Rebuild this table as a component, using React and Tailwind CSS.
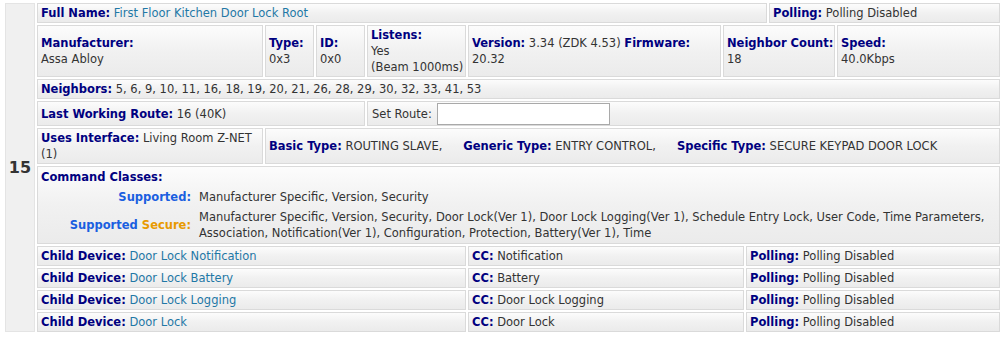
import React from 'react';

const Cell = ({ className = '', children }) => (
    <div className={`border border-[#dadada] bg-linear-to-b from-[#fcfcfc] via-[#f1f1f1] to-[#ebebeb] pl-[3px] pr-[3px] flex flex-col justify-center ${className}`}>
        {children}
    </div>
);

const Label = ({ children }) => <b className="font-bold text-[#000080]">{children}</b>;

const Link = ({ children }) => <span className="text-[#1f78a6]">{children}</span>;

const childDevices = [
    { name: 'Door Lock Notification', cc: 'Notification' },
    { name: 'Door Lock Battery', cc: 'Battery' },
    { name: 'Door Lock Logging', cc: 'Door Lock Logging' },
    { name: 'Door Lock', cc: 'Door Lock' },
];

export default function App() {
    return (
        <div className="w-[1001px] h-[337px] bg-white font-['DejaVu_Sans',sans-serif] text-[11.5px] leading-4 text-[#333]">
            <div className="flex gap-[2px] pt-[3px] pl-[5px]">
                {/* node number column */}
                <div className="w-[30px] h-[329px] bg-[#f0f0f0] border border-[#e4e4e4] flex items-center justify-center">
                    <span className="text-[16px] font-bold text-[#333]">15</span>
                </div>

                <div className="w-[963px] flex flex-col gap-[2px]">
                    <div className="flex gap-[2px] h-[20px]">
                        <Cell className="w-[730px]">
                            <div><Label>Full Name:</Label> <Link>First Floor Kitchen Door Lock Root</Link></div>
                        </Cell>
                        <Cell className="flex-1">
                            <div><Label>Polling:</Label> Polling Disabled</div>
                        </Cell>
                    </div>

                    <div className="flex gap-[2px] h-[52px]">
                        <Cell className="w-[226px]">
                            <div><Label>Manufacturer:</Label></div>
                            <div>Assa Abloy</div>
                        </Cell>
                        <Cell className="w-[49px]">
                            <div><Label>Type:</Label></div>
                            <div>0x3</div>
                        </Cell>
                        <Cell className="w-[49px]">
                            <div><Label>ID:</Label></div>
                            <div>0x0</div>
                        </Cell>
                        <Cell className="w-[99px]">
                            <div><Label>Listens:</Label></div>
                            <div>Yes</div>
                            <div className="whitespace-nowrap">(Beam 1000ms)</div>
                        </Cell>
                        <Cell className="w-[253px]">
                            <div><Label>Version:</Label> 3.34 (ZDK 4.53) <Label>Firmware:</Label></div>
                            <div>20.32</div>
                        </Cell>
                        <Cell className="w-[112px]">
                            <div className="whitespace-nowrap"><Label>Neighbor Count:</Label></div>
                            <div>18</div>
                        </Cell>
                        <Cell className="flex-1">
                            <div><Label>Speed:</Label></div>
                            <div>40.0Kbps</div>
                        </Cell>
                    </div>

                    <div className="flex h-[20px]">
                        <Cell className="flex-1">
                            <div><Label>Neighbors:</Label> 5, 6, 9, 10, 11, 16, 18, 19, 20, 21, 26, 28, 29, 30, 32, 33, 41, 53</div>
                        </Cell>
                    </div>

                    <div className="flex gap-[2px] h-[25px]">
                        <Cell className="w-[328px]">
                            <div><Label>Last Working Route:</Label> 16 (40K)</div>
                        </Cell>
                        <Cell className="flex-1 !flex-row !justify-start items-center pl-[4px]">
                            <span className="mr-[5px]">Set Route:</span>
                            <input type="text" className="w-[173px] h-[22px] bg-white border border-[#a9a9a9] outline-none" />
                        </Cell>
                    </div>

                    <div className="flex gap-[2px] h-[36px]">
                        <Cell className="w-[226px]">
                            <div><Label>Uses Interface:</Label> Living Room Z-NET<br />(1)</div>
                        </Cell>
                        <Cell className="flex-1 !flex-row !justify-start items-center gap-[21px]">
                            <span><Label>Basic Type:</Label> ROUTING SLAVE,</span>
                            <span><Label>Generic Type:</Label> ENTRY CONTROL,</span>
                            <span><Label>Specific Type:</Label> SECURE KEYPAD DOOR LOCK</span>
                        </Cell>
                    </div>

                    <div className="flex h-[78px]">
                        <Cell className="flex-1 !justify-start pt-[2px] gap-1">
                            <div><Label>Command Classes:</Label></div>
                            <div className="flex">
                                <div className="w-[150px] text-right font-bold text-[#1a5fe0]">Supported:</div>
                                <div className="pl-[8px]">Manufacturer Specific, Version, Security</div>
                            </div>
                            <div className="flex items-center">
                                <div className="w-[150px] text-right font-bold whitespace-nowrap">
                                    <span className="text-[#1a5fe0]">Supported</span> <span className="text-[#e89a00]">Secure:</span>
                                </div>
                                <div className="pl-[8px] whitespace-nowrap">
                                    Manufacturer Specific, Version, Security, Door Lock(Ver 1), Door Lock Logging(Ver 1), Schedule Entry Lock, User Code, Time Parameters,
                                    <br />
                                    Association, Notification(Ver 1), Configuration, Protection, Battery(Ver 1), Time
                                </div>
                            </div>
                        </Cell>
                    </div>

                    {childDevices.map((d) => (
                        <div key={d.name} className="flex gap-[2px] h-[20px]">
                            <Cell className="w-[429px]">
                                <div><Label>Child Device:</Label> <Link>{d.name}</Link></div>
                            </Cell>
                            <Cell className="w-[276px]">
                                <div><Label>CC:</Label> {d.cc}</div>
                            </Cell>
                            <Cell className="flex-1">
                                <div><Label>Polling:</Label> Polling Disabled</div>
                            </Cell>
                        </div>
                    ))}
                </div>
            </div>
        </div>
    );
}
